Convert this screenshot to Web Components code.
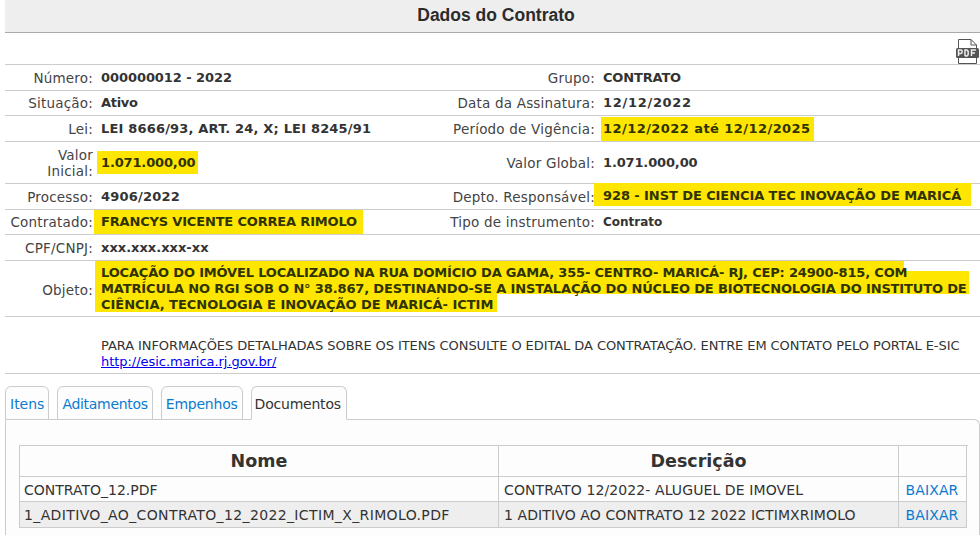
<!DOCTYPE html>
<html>
<head>
<meta charset="utf-8">
<title>Dados do Contrato</title>
<style>
    html, body { margin: 0; padding: 0; background: #fff; overflow: hidden; }
    body { padding-left: 5px; font-family: "DejaVu Sans", Verdana, sans-serif; font-size: 13px; color: #333; }
</style>
</head>
<body>
<contract-page></contract-page>

<script>
class PageTitle extends HTMLElement {
    constructor() {
        super();
        this.attachShadow({mode: "open"}).innerHTML = `
            <style>
                :host {
                    display: block;
                    height: 32px;
                    padding-left: 7px;
                    background: #eee;
                    border-bottom: 1px solid #aaa;
                    text-align: center;
                    font: bold 17.5px/31px "Liberation Sans", Arial, sans-serif;
                    color: #2b2b2b;
                }
            </style>
            <slot></slot>
        `;
    }
}

class PdfIcon extends HTMLElement {
    constructor() {
        super();
        this.attachShadow({mode: "open"}).innerHTML = `
            <style>
                :host { display: block; width: 24px; height: 25px; }
                svg { display: block; }
            </style>
            <svg width="24" height="25" viewBox="0 0 24 25">
                <path d="M2.5 9V.5H15L20.5 6V9M15 .5V6H20.5" fill="#fff" stroke="#555" stroke-width="1"/>
                <path d="M2.5 19V24.5H20.5V19" fill="#fff" stroke="#555" stroke-width="1"/>
                <rect x="0" y="9" width="23" height="10" rx="1.5" fill="#555"/>
                <path d="M2.5 17V11H5C6.6 11 6.6 14.4 5 14.4H2.5M9 17V11H10.6C12.8 11 12.8 17 10.6 17H9M15.5 17V11H20M15.5 14H19" fill="none" stroke="#eee" stroke-width="1.5"/>
            </svg>
        `;
    }
}

class InfoRow extends HTMLElement {
    constructor() {
        super();
        this.attachShadow({mode: "open"}).innerHTML = `
            <style>
                :host {
                    display: grid;
                    grid-template-columns: 88px 1fr;
                    column-gap: 8px;
                    align-items: center;
                    height: var(--row-height, 25px);
                    border-bottom: 1px solid #ccc;
                    line-height: 16px;
                }
                .label { text-align: right; color: #444; font-size: 13.5px; letter-spacing: .2px; }
                .value { font-weight: bold; white-space: nowrap; }
            </style>
            <div class="label"><slot name="label"></slot></div>
            <div class="value"><slot></slot></div>
        `;
    }
}

class InfoPair extends HTMLElement {
    constructor() {
        super();
        this.attachShadow({mode: "open"}).innerHTML = `
            <style>
                :host {
                    display: grid;
                    grid-template-columns: 88px 8px 290px 204px 8px 1fr;
                    grid-template-rows: 1fr;
                    align-items: center;
                    height: var(--row-height, 25px);
                    border-bottom: 1px solid #ccc;
                    line-height: 16px;
                }
                .label { grid-row: 1; text-align: right; color: #444; font-size: 13.5px; letter-spacing: .2px; white-space: nowrap; }
                .value { grid-row: 1; font-weight: bold; white-space: nowrap; }
                .l1 { grid-column: 1; }
                .v1 { grid-column: 3; }
                .l2 { grid-column: 4; }
                .v2 { grid-column: 6; }
            </style>
            <div class="label l1"><slot name="l1"></slot></div>
            <div class="value v1"><slot name="v1"></slot></div>
            <div class="label l2"><slot name="l2"></slot></div>
            <div class="value v2"><slot name="v2"></slot></div>
        `;
    }
}

class MarkerText extends HTMLElement {
    constructor() {
        super();
        this.attachShadow({mode: "open"}).innerHTML = `
            <style>
                :host {
                    display: inline-block;
                    background: #ffe600;
                    color: #2f3300;
                    padding: var(--mark-pad, 4px 3px 3px 4px);
                    margin: var(--mark-margin, 0 0 0 -4px);
                }
            </style>
            <slot></slot>
        `;
    }
}

class TabBar extends HTMLElement {
    constructor() {
        super();
        this.attachShadow({mode: "open"}).innerHTML = `
            <style>
                :host {
                    display: flex;
                    gap: 8px;
                    height: 33px;
                    margin-top: 12px;
                    position: relative;
                    z-index: 1;
                }
            </style>
            <slot></slot>
        `;
    }
}

class TabItem extends HTMLElement {
    constructor() {
        super();
        this.attachShadow({mode: "open"}).innerHTML = `
            <style>
                :host {
                    display: block;
                    box-sizing: border-box;
                    height: 34px;
                    padding: 0 4px;
                    line-height: 34px;
                    background: #fdfdfd;
                    border: 1px solid #ccc;
                    border-radius: 6px 6px 0 0;
                    color: #0b7ad1;
                    font-size: 14px;
                    letter-spacing: -.22px;
                }
                :host([active]) {
                    padding: 0 5px 0 3px;
                    border-bottom-color: #fdfdfd;
                    color: #333;
                }
            </style>
            <slot></slot>
        `;
    }
}

class DocsTable extends HTMLElement {
    constructor() {
        super();
        this.attachShadow({mode: "open"}).innerHTML = `
            <style>
                :host {
                    display: block;
                    box-sizing: border-box;
                    height: 120px;
                    padding: 25px 13px 0;
                    background: #fdfdfd;
                    border: 1px solid #ccc;
                    border-bottom: 0;
                    border-radius: 0 6px 0 0;
                }
                .grid {
                    display: grid;
                    grid-template-columns: 479px 400px 68px;
                    grid-template-rows: 31px 25px 26px;
                    border-top: 1px solid #ccc;
                    border-left: 1px solid #ccc;
                    width: 948px;
                    font-size: 14px;
                }
                .grid > div {
                    box-sizing: border-box;
                    border-right: 1px solid #ccc;
                    border-bottom: 1px solid #ccc;
                    padding: 0 4px;
                    line-height: 26px;
                    white-space: nowrap;
                    letter-spacing: .1px;
                }
                .grid > .desc { padding-left: 5px; }
                .grid > .head {
                    line-height: 30px;
                    text-align: center;
                    font-weight: bold;
                    font-size: 17.5px;
                    letter-spacing: 0;
                }
                .grid > .alt { background: #eee; }
                .grid > .link { color: #0b7ad1; text-align: center; padding: 0 1px 0 0; }
            </style>
            <div class="grid">
                <div class="head">Nome</div>
                <div class="head">Descrição</div>
                <div class="head"></div>
                <div style="letter-spacing:0">CONTRATO_12.PDF</div>
                <div class="desc">CONTRATO 12/2022- ALUGUEL DE IMOVEL</div>
                <div class="link">BAIXAR</div>
                <div class="alt" style="letter-spacing:.37px">1_ADITIVO_AO_CONTRATO_12_2022_ICTIM_X_RIMOLO.PDF</div>
                <div class="alt desc">1 ADITIVO AO CONTRATO 12 2022 ICTIMXRIMOLO</div>
                <div class="alt link">BAIXAR</div>
            </div>
        `;
    }
}

class ContractPage extends HTMLElement {
    constructor() {
        super();
        this.attachShadow({mode: "open"}).innerHTML = `
            <style>
                :host { display: block; width: 975px; }
                .tools {
                    display: flex;
                    justify-content: flex-end;
                    align-items: flex-end;
                    height: 31px;
                    border-bottom: 1px solid #ccc;
                }
                a { color: #00e; }
                .notebox { box-sizing: content-box; padding: 21px 0 0 96px; height: 35px; border-bottom: 1px solid #ccc; line-height: 16px; white-space: nowrap; letter-spacing: -.08px; }
                .caps { letter-spacing: -.17px; }
                /* the hand-drawn highlight has a different box on each line */
                .objeto { margin-bottom: 6px; color: #2f3300; }
                .objeto div { background: #ffe600; margin-left: -6px; padding-left: 6px; }
                .objeto .a { width: 803px; padding-top: 4px; height: 16px; letter-spacing: -.17px; }
                .objeto .b { width: 868px; margin-top: -10px; padding-top: 10px; height: 13px; letter-spacing: -.14px; }
                .objeto .c { width: 396px; padding-top: 3px; height: 15px; letter-spacing: -.02px; }
            </style>
            <page-title>Dados do Contrato</page-title>
            <div class="tools"><pdf-icon></pdf-icon></div>

            <info-pair>
                <span slot="l1">Número:</span><span slot="v1" style="letter-spacing:-.07px">000000012 - 2022</span>
                <span slot="l2">Grupo:</span><span slot="v2" class="caps">CONTRATO</span>
            </info-pair>
            <info-pair style="--row-height:24px">
                <span slot="l1">Situação:</span><span slot="v1" style="letter-spacing:-.3px">Ativo</span>
                <span slot="l2">Data da Assinatura:</span><span slot="v2" style="letter-spacing:.7px">12/12/2022</span>
            </info-pair>
            <info-pair>
                <span slot="l1">Lei:</span><span slot="v1" style="letter-spacing:.18px">LEI 8666/93, ART. 24, X; LEI 8245/91</span>
                <span slot="l2">Período de Vigência:</span>
                <span slot="v2"><marker-text style="--mark-pad:4px 3px 4px 2px;--mark-margin:0 0 0 -2px;letter-spacing:.44px">12/12/2022 até 12/12/2025</marker-text></span>
            </info-pair>
            <info-pair style="--row-height:41px">
                <span slot="l1">Valor<br>Inicial:</span>
                <span slot="v1"><marker-text style="letter-spacing:-.15px">1.071.000,00</marker-text></span>
                <span slot="l2">Valor Global:</span><span slot="v2" style="letter-spacing:-.15px">1.071.000,00</span>
            </info-pair>
            <info-pair>
                <span slot="l1">Processo:</span><span slot="v1" style="letter-spacing:.2px">4906/2022</span>
                <span slot="l2">Depto. Responsável:</span>
                <span slot="v2"><marker-text style="--mark-pad:5px 10px 2px 9px;--mark-margin:-2px 0 2px -9px;letter-spacing:-.08px">928 - INST DE CIENCIA TEC INOVAÇÃO DE MARICÁ</marker-text></span>
            </info-pair>
            <info-pair style="--row-height:24px">
                <span slot="l1">Contratado:</span>
                <span slot="v1"><marker-text style="--mark-pad:4px 6px 4px 7px;--mark-margin:0 0 0 -7px" class="caps">FRANCYS VICENTE CORREA RIMOLO</marker-text></span>
                <span slot="l2">Tipo de instrumento:</span><span slot="v2" style="font-size:12px">Contrato</span>
            </info-pair>
            <info-row>
                <span slot="label">CPF/CNPJ:</span>xxx.xxx.xxx-xx
            </info-row>
            <info-row style="--row-height:55px">
                <span slot="label">Objeto:</span>
                <div class="objeto">
                    <div class="a">LOCAÇÃO DO IMÓVEL LOCALIZADO NA RUA DOMÍCIO DA GAMA, 355- CENTRO- MARICÁ- RJ, CEP: 24900-815, COM</div>
                    <div class="b">MATRÍCULA NO RGI SOB O N° 38.867, DESTINANDO-SE A INSTALAÇÃO DO NÚCLEO DE BIOTECNOLOGIA DO INSTITUTO DE</div>
                    <div class="c">CIÊNCIA, TECNOLOGIA E INOVAÇÃO DE MARICÁ- ICTIM</div>
                </div>
            </info-row>
            <div class="notebox">PARA INFORMAÇÕES DETALHADAS SOBRE OS ITENS CONSULTE O EDITAL DA CONTRATAÇÃO. ENTRE EM CONTATO PELO PORTAL E-SIC<br><a href="#" style="letter-spacing:-.04px">http://esic.marica.rj.gov.br/</a></div>

            <tab-bar>
                <tab-item style="letter-spacing:0">Itens</tab-item>
                <tab-item style="letter-spacing:-.3px">Aditamentos</tab-item>
                <tab-item>Empenhos</tab-item>
                <tab-item active>Documentos</tab-item>
            </tab-bar>
            <docs-table></docs-table>
        `;
    }
}

customElements.define("page-title", PageTitle);
customElements.define("pdf-icon", PdfIcon);
customElements.define("info-row", InfoRow);
customElements.define("info-pair", InfoPair);
customElements.define("marker-text", MarkerText);
customElements.define("tab-bar", TabBar);
customElements.define("tab-item", TabItem);
customElements.define("docs-table", DocsTable);
customElements.define("contract-page", ContractPage);
</script>
</body>
</html>
